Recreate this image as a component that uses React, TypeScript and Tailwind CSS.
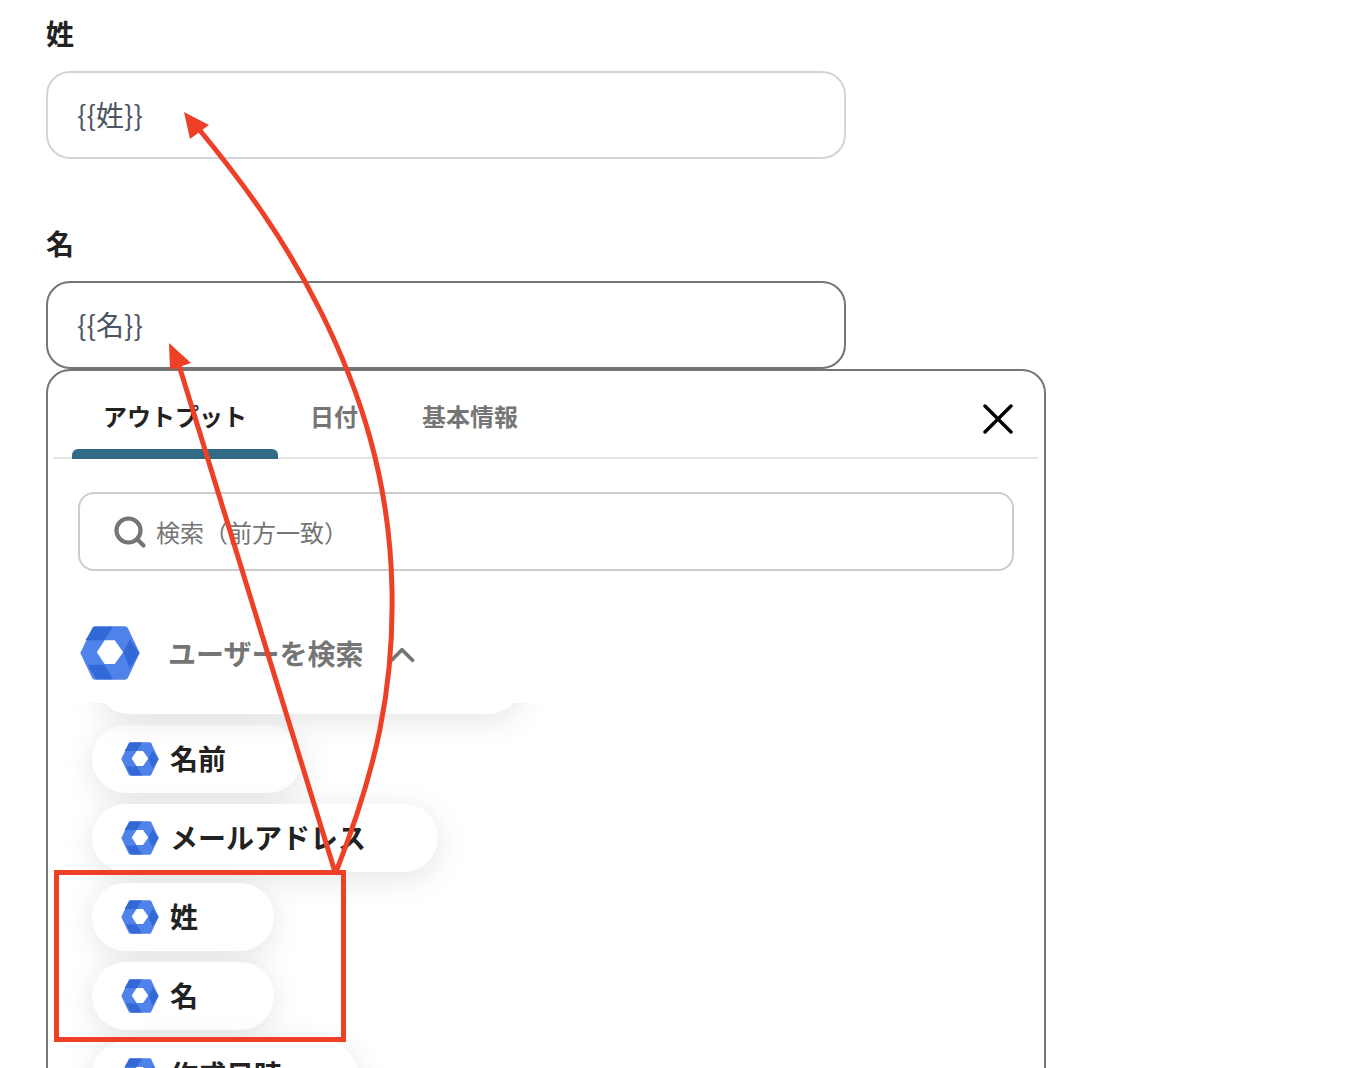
import { Search, ChevronUp } from 'lucide-react';

function HexLogo({ className }: { className: string }) {
  return (
    <svg viewBox="0 0 178 160" className={className}>
      <path d="M1 80 36 6q3-5 9-5h88q6 0 9 5l35 74-35 74q-3 5-9 5H45q-6 0-9-5Z" fill="#5083ea" />
      <path d="M41 2h57L73 42H16Z" fill="#3369d6" />
      <path d="M128 78l20-38 28 40-28 45Z" fill="#3369d6" />
      <path d="M23 115h50l25 43H48Z" fill="#3369d6" />
      <path d="M50 78 73 42h30l25 36-25 35H73Z" fill="#fff" />
    </svg>
  );
}

function OutputPill({ label, width }: { label: string; width: string }) {
  return (
    <div className={`${width} h-[68px] shrink-0 rounded-full bg-white pl-[29px] flex items-center gap-[11px] shadow-[0_6px_32px_rgba(0,0,0,0.11)]`}>
      <HexLogo className="w-[38px] h-[34px] shrink-0" />
      <span className="pb-[2px] text-[28px] leading-none font-bold text-[#222] whitespace-nowrap">{label}</span>
    </div>
  );
}

function Field({ label, value, active }: { label: string; value: string; active?: boolean }) {
  return (
    <div className="w-[800px]">
      <div className="text-[28px] leading-[40px] font-bold text-[#222]">{label}</div>
      <div className={`mt-[18px] h-[88px] rounded-[24px] border-2 flex items-center pl-[29px] pb-[2px] text-[28px] text-[#4b5563] ${active ? 'border-[#757575]' : 'border-[#d1d5db]'}`}>
        {value}
      </div>
    </div>
  );
}

export default function App() {
  return (
    <div className="relative h-[1068px] overflow-hidden bg-white pl-[46px] pt-[13px] font-['Noto_Sans_CJK_JP','Noto_Sans',sans-serif]">
      <Field label="姓" value="{{姓}}" />
      <div className="mt-[64px]">
        <Field label="名" value="{{名}}" active />
      </div>

      <div className="relative w-[1000px] h-[800px] rounded-t-[24px] border-2 border-[#757575] bg-white">
        <div className="ml-[5px] mr-[6px] pl-[19px] flex border-b-2 border-[#e5e5e5] h-[88px]">
          <div className="relative w-[206px] flex items-center justify-center pt-[4px] text-2xl font-bold text-[#222]">
            アウトプット
            <div className="absolute left-0 right-0 -bottom-[2px] h-[10px] rounded-t-md bg-[#306a84]" />
          </div>
          <div className="w-[112px] flex items-center justify-center pt-[4px] text-2xl font-bold text-[#757575]">日付</div>
          <div className="w-[160px] flex items-center justify-center pt-[4px] text-2xl font-bold text-[#757575]">基本情報</div>
          <div className="ml-auto mr-[25px] flex items-center pt-[10px]">
            <svg viewBox="0 0 30 30" className="w-[30px] h-[30px]" stroke="#000" strokeWidth="3.4" strokeLinecap="round">
              <path d="M2 2 28 28M28 2 2 28" />
            </svg>
          </div>
        </div>

        <div className="mt-[33px] ml-[30px] mr-[30px] h-[79px] rounded-2xl border-2 border-[#cccccc] flex items-center pl-[32px] gap-2 text-2xl text-[#757575]">
          <Search size={36} strokeWidth={2.8} className="shrink-0" />
          <span>検索（前方一致）</span>
        </div>

        <div className="relative mt-[38px] h-[108px]">
          <div className="absolute left-[49px] top-[40px] w-[424px] h-[65px] rounded-b-[32px] bg-white shadow-[0_6px_32px_rgba(0,0,0,0.11)]" />
          <div className="relative ml-[22px] w-[476px] h-[94px] bg-white flex items-center pl-[10px] pb-[6px]">
            <HexLogo className="w-[60px] h-[54px] shrink-0" />
            <span className="ml-[28px] text-[28px] leading-none font-bold text-[#757575] whitespace-nowrap">ユーザーを検索</span>
            <ChevronUp size={42} strokeWidth={2.2} className="ml-[18px] mt-[4px] text-[#757575]" />
          </div>
        </div>

        <div className="mt-[8px] ml-[44px] flex flex-col gap-[11px]">
          <OutputPill label="名前" width="w-[210px]" />
          <OutputPill label="メールアドレス" width="w-[346px]" />
          <OutputPill label="姓" width="w-[182px]" />
          <OutputPill label="名" width="w-[182px]" />
          <OutputPill label="作成日時" width="w-[266px]" />
        </div>
      </div>

      {/* annotation drawn on top of the screenshot */}
      <svg viewBox="0 0 1346 1068" className="absolute inset-0 w-[1346px] h-[1068px] pointer-events-none">
        <path d="M336 872C376 770 394 690 392 590C390 480 360 390 320 310C285 240 245 185 198 128" fill="none" stroke="#ee4026" strokeWidth="5" />
        <path d="M335 872 178 362" fill="none" stroke="#ee4026" strokeWidth="5" />
        <path d="M184 112 209 125 190 139Z" fill="#ee4026" />
        <path d="M169 343 191 363 170 370Z" fill="#ee4026" />
      </svg>
      <div className="absolute left-[54px] top-[870px] w-[292px] h-[172px] border-[5px] border-[#ee4026]" />
    </div>
  );
}
